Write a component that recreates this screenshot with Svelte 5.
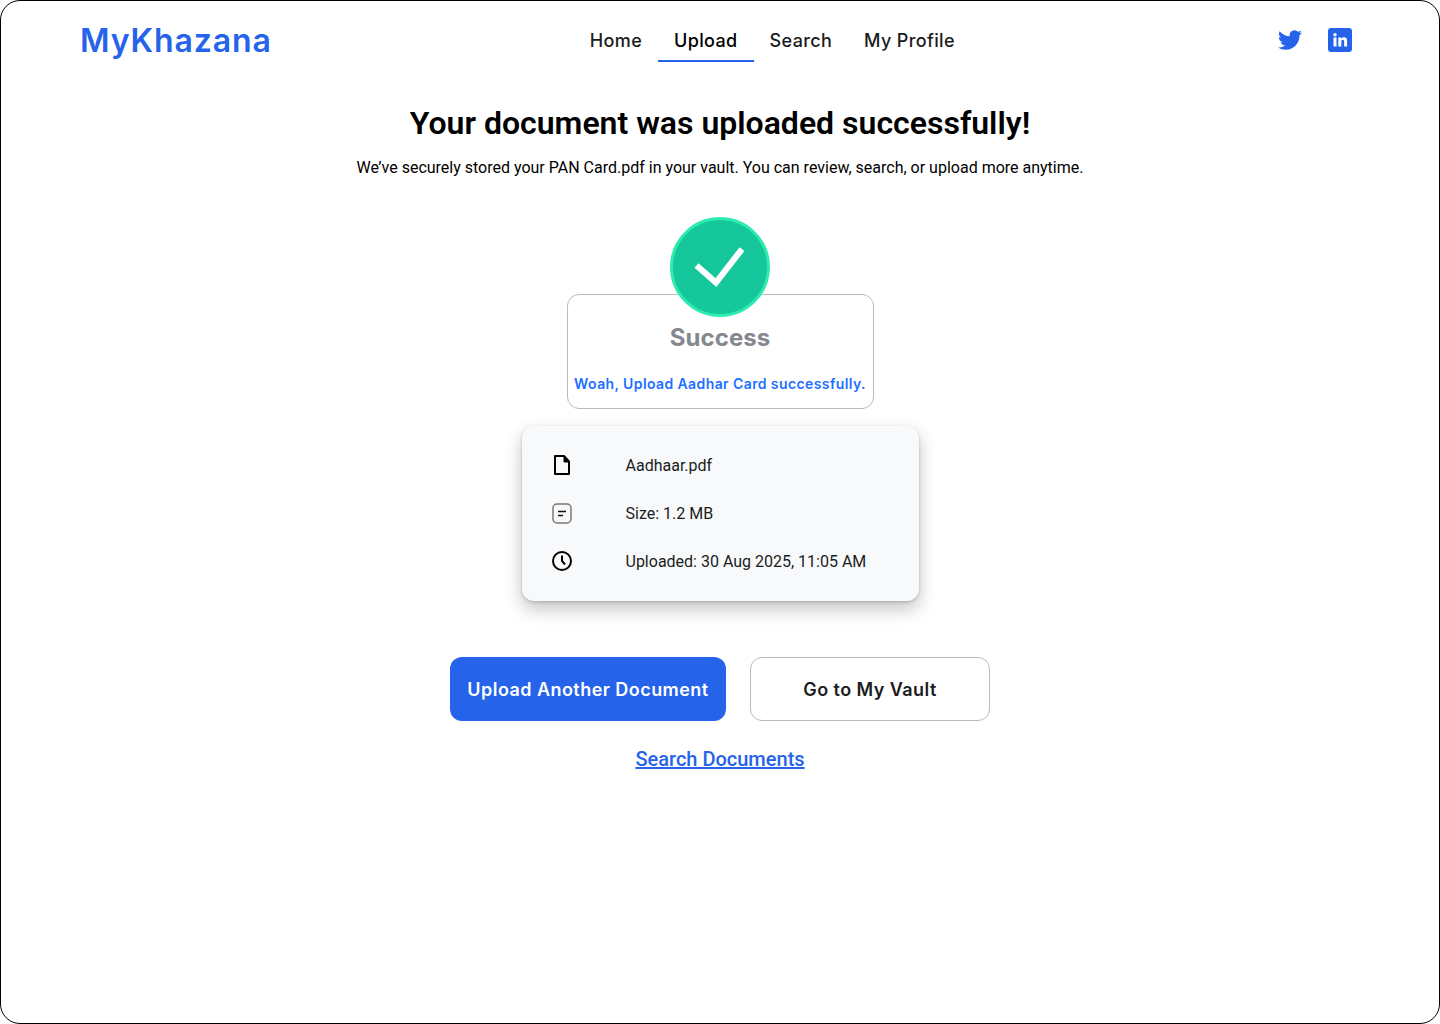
<script>
    const links = ["Home", "Upload", "Search", "My Profile"];
    const active = "Upload";
</script>

<div class="frame">
    <header>
        <div class="logo">MyKhazana</div>
        <nav>
            {#each links as link}
                <a href="#top" class:active={link === active}>{link}</a>
            {/each}
        </nav>
        <div class="social">
            <svg class="twitter" viewBox="0 0 24 24" width="24" height="24" aria-hidden="true">
                <path fill="#2563eb" d="M23.95 4.57a10 10 0 0 1-2.82.77 4.96 4.96 0 0 0 2.16-2.72c-.95.55-2 .95-3.12 1.18a4.92 4.92 0 0 0-8.38 4.48C7.69 8.1 4.07 6.13 1.64 3.16a4.82 4.82 0 0 0-.67 2.48c0 1.71.87 3.21 2.19 4.1a4.9 4.9 0 0 1-2.23-.62v.06a4.92 4.92 0 0 0 3.95 4.83 5 5 0 0 1-2.21.08 4.94 4.94 0 0 0 4.6 3.42A9.87 9.87 0 0 1 0 19.54a13.94 13.94 0 0 0 7.55 2.21c9.05 0 14-7.5 14-13.98 0-.21 0-.42-.02-.63a9.94 9.94 0 0 0 2.46-2.55z" />
            </svg>
            <svg viewBox="0 0 24 24" width="24" height="24" aria-hidden="true">
                <rect width="24" height="24" rx="3" fill="#2563eb" />
                <rect x="5.5" y="9.5" width="3" height="9" fill="#fff" />
                <circle cx="7" cy="6.8" r="1.7" fill="#fff" />
                <path fill="#fff" d="M10.3 9.5h2.9v1.3c.5-.9 1.5-1.5 2.8-1.5 2.3 0 3.1 1.4 3.1 3.7v5.5h-3v-4.9c0-1.2-.3-1.9-1.3-1.9-1.1 0-1.5.8-1.5 1.9v4.9h-3z" />
            </svg>
        </div>
    </header>

    <main>
        <h1>Your document was uploaded successfully!</h1>
        <p class="lead">We’ve securely stored your PAN Card.pdf in your vault. You can review, search, or upload more anytime.</p>

        <section class="success">
            <div class="badge">
                <svg viewBox="0 0 100 100" width="94" height="94" aria-hidden="true">
                    <path d="M25 48.4 L45.7 66.5 L73.4 30.9" fill="none" stroke="#fff" stroke-width="6.5" />
                </svg>
            </div>
            <h2>Success</h2>
            <p>Woah, Upload Aadhar Card successfully.</p>
        </section>

        <section class="info">
            <div class="row">
                <svg viewBox="0 0 24 24" width="24" height="24" aria-hidden="true">
                    <path d="M5 3h9l5 5.5V21H5z" fill="none" stroke="#000" stroke-width="2" stroke-linejoin="round" />
                    <path d="M14 3v6h5z" fill="#000" stroke="#000" stroke-width="1" stroke-linejoin="round" />
                </svg>
                <span>Aadhaar.pdf</span>
            </div>
            <div class="row">
                <svg viewBox="0 0 24 24" width="24" height="24" aria-hidden="true">
                    <rect x="3" y="3" width="18" height="19" rx="4" fill="none" stroke="#777" stroke-width="1.5" />
                    <path d="M8 10.5h8M8 14.5h5" stroke="#111" stroke-width="1.7" />
                </svg>
                <span>Size: 1.2 MB</span>
            </div>
            <div class="row">
                <svg viewBox="0 0 24 24" width="24" height="24" aria-hidden="true">
                    <circle cx="12" cy="12" r="9" fill="none" stroke="#000" stroke-width="2" />
                    <path d="M12 6.5V12l3 3.5" fill="none" stroke="#000" stroke-width="2" />
                </svg>
                <span>Uploaded: 30 Aug 2025, 11:05 AM</span>
            </div>
        </section>

        <div class="actions">
            <button class="primary">Upload Another Document</button>
            <button class="secondary">Go to My Vault</button>
        </div>
        <a class="search-link" href="#top">Search Documents</a>
    </main>
</div>

<style>
    :global(body) {
        margin: 0;
        background: #fff;
    }

    .frame {
        box-sizing: border-box;
        height: 1024px;
        border: 1px solid #000;
        border-radius: 20px;
        background: #fff;
        font-family: Roboto, "Liberation Sans", sans-serif;
    }

    header {
        display: flex;
        align-items: center;
        justify-content: space-between;
        box-sizing: border-box;
        height: 61px;
        padding: 17px 87px 0 79px;
    }

    .logo {
        padding-top: 2px;
        font-family: Inter, "Liberation Sans", sans-serif;
        font-size: 32px;
        line-height: 44px;
        font-weight: 600;
        color: #2563eb;
        letter-spacing: 0.9px;
    }

    nav {
        display: flex;
        margin-right: 5px;
    }

    nav a {
        box-sizing: border-box;
        height: 44px;
        padding: 0 16px;
        font-family: Inter, "Liberation Sans", sans-serif;
        font-size: 18px;
        line-height: 46px;
        font-weight: 500;
        color: #1a1c20;
        text-decoration: none;
        letter-spacing: 0.35px;
    }

    nav a.active {
        border-bottom: 2px solid #2563eb;
        color: #000;
    }

    .social {
        display: flex;
        align-items: center;
        gap: 26px;
    }

    main {
        display: flex;
        flex-direction: column;
        align-items: center;
    }

    h1 {
        margin: 41px 0 0;
        font-size: 32px;
        line-height: 40px;
        font-weight: 600;
        color: #000;
    }

    .lead {
        margin: 15px 0 0;
        font-size: 16px;
        line-height: 20px;
        color: #000;
    }

    .success {
        position: relative;
        box-sizing: border-box;
        width: 307px;
        height: 115px;
        margin-top: 116px;
        border: 1px solid #bbb;
        border-radius: 12px;
        text-align: center;
    }

    .badge {
        position: absolute;
        top: -78px;
        left: 102px;
        display: flex;
        box-sizing: border-box;
        width: 100px;
        height: 100px;
        border: 3px solid #2eebae;
        border-radius: 50%;
        background: #17c79c;
    }

    .success h2 {
        margin: 28px 0 0;
        font-family: Inter, "Liberation Sans", sans-serif;
        font-size: 24px;
        line-height: 30px;
        font-weight: 700;
        color: #85888e;
        letter-spacing: 0.05px;
    }

    .success p {
        margin: 21px 0 0;
        font-family: Inter, "Liberation Sans", sans-serif;
        font-size: 14px;
        line-height: 20px;
        font-weight: 600;
        color: #1f6fff;
        white-space: nowrap;
        letter-spacing: 0.4px;
    }

    .info {
        box-sizing: border-box;
        display: flex;
        flex-direction: column;
        width: 397px;
        height: 175px;
        margin-top: 17px;
        padding: 15px 28px;
        border-radius: 12px;
        background: #f8f9fb;
        box-shadow: 0 8px 18px rgba(0, 0, 0, 0.24), 0 1px 3px rgba(0, 0, 0, 0.18);
    }

    .row {
        display: flex;
        align-items: center;
        gap: 52px;
        height: 48px;
        font-size: 16px;
        color: #1a1c20;
    }

    .actions {
        display: flex;
        gap: 24px;
        margin-top: 56px;
    }

    button {
        box-sizing: border-box;
        height: 64px;
        border-radius: 12px;
        font-family: Inter, "Liberation Sans", sans-serif;
        font-size: 18px;
        font-weight: 600;
        letter-spacing: 0.45px;
    }

    .primary {
        width: 276px;
        border: none;
        background: #2563eb;
        color: #fff;
    }

    .secondary {
        width: 240px;
        border: 1px solid #bbb;
        background: #fff;
        color: #1a1c20;
    }

    .search-link {
        margin-top: 26px;
        font-size: 20px;
        line-height: 24px;
        font-weight: 500;
        color: #2563eb;
    }
</style>
